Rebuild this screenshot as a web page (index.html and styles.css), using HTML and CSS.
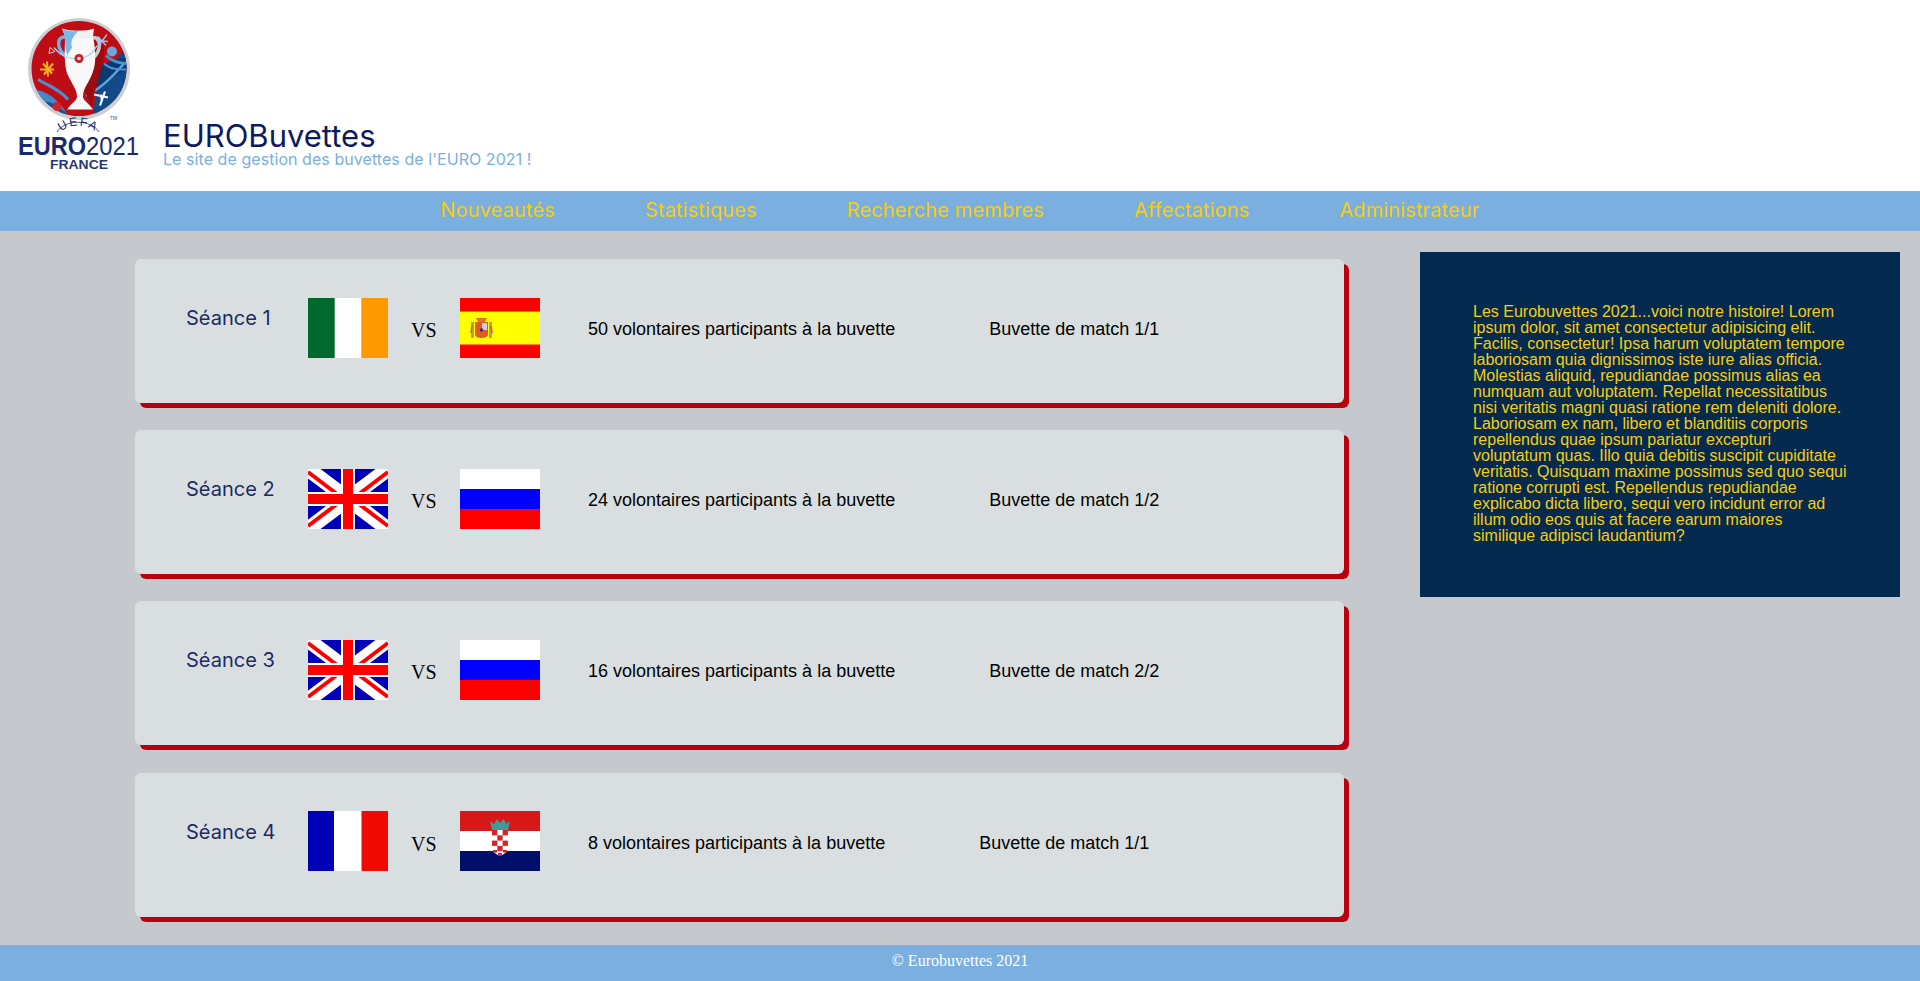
FILE: index.html
```html
<!DOCTYPE html>
<html lang="fr">
<head>
<meta charset="utf-8">
<title>EUROBuvettes</title>
<link rel="stylesheet" href="styles.css">
</head>
<body>
<header class="site-header">
  <svg class="logo" viewBox="14 14 130 160" width="130" height="160" aria-label="UEFA Euro 2021 France">
    <defs>
      <clipPath id="disc"><circle cx="79" cy="67" r="47.500"/></clipPath>
      <path id="uefa-arc" d="M59 134 C67 123 89 123 97 134"/>
    </defs>
    <g class="logo-art">
      <circle cx="79" cy="67.500" r="51" fill="#ccd0d5"/>
      <g clip-path="url(#disc)">
        <rect x="30" y="15" width="100" height="105" fill="#bf0d16"/>
        <path d="M30 88 C46 88 58 96 72 120 L30 125 Z" fill="#3f8cca"/>
        <path d="M46 100 C56 102 64 108 72 118 L42 120 Z" fill="#1c4f94"/>
        <path d="M94 112 C94 92 100 70 132 42 L132 125 L90 125 Z" fill="#104a88"/>
        <path d="M96 66 C106 62 116 56 128 56 L128 68 C114 74 104 82 92 88 Z" fill="#0b3a72"/>
        <path d="M86 94 C100 88 112 76 124 62" fill="none" stroke="#5da5dc" stroke-width="2.500"/>
        <path d="M106 54 C112 60 120 62 128 62" fill="none" stroke="#4a93d0" stroke-width="3"/>
        <path d="M104 62 C110 68 118 68 126 68" fill="none" stroke="#4a93d0" stroke-width="2"/>
        <path d="M38 78 C48 84 60 88 68 98" fill="none" stroke="#4f8fd0" stroke-width="3"/>
        <path d="M96 42 C92 54 96 72 84 88 L92 106 C96 80 106 60 104 44 Z" fill="#9c0b12"/>
      </g>
      <path d="M69 37 C56 30 54 50 70 57" fill="none" stroke="#6db1e3" stroke-width="3.500"/>
      <path d="M91 37 C102 32 102 51 92 57" fill="none" stroke="#c9ccd0" stroke-width="3.500"/>
      <path d="M65 35 C74 37 84 37 93 35 C96 50 96 62 93 70 C90 80 83 86 83 95 C83 99 89 102 93 108 L67 108 C71 102 77 99 77 95 C77 86 68 78 66 68 C64 56 65 44 65 35 Z" fill="#f8f8f9"/>
      <path d="M62 27 C70 30 86 30 94 27 L93 35 C84 38 74 38 65 35 Z" fill="#f1f2f3"/>
      <path d="M63 28 C69 30 74 30 79 29 C73 34 70 40 72 46 L67 54 C65 46 65 40 65 35 Z" fill="#7ab8e8"/>
      <path d="M54 46 C60 54 72 60 84 56 C90 54 94 50 97 44" fill="none" stroke="#a6d0ec" stroke-width="1.300"/>
      <circle cx="79" cy="57" r="4.500" fill="#c5222a"/>
      <circle cx="79" cy="57" r="1.800" fill="#f3d8d8"/>
      <circle cx="112" cy="50" r="5" fill="#69a7dc"/>
      <path d="M98 35 L106 44 M107 33 L98 45 M96 39 L108 40" stroke="#9cc6ea" stroke-width="1.300"/>
      <path d="M43 62 L52 72 M53 62 L44 73 M40 68 L54 68 M47 60 L48 75" stroke="#f3b11e" stroke-width="2"/>
      <path d="M94 93 L108 96 M105 90 L100 104 M101 93 L102 100" stroke="#f4f7fa" stroke-width="2.200"/>
      <circle cx="57" cy="105" r="4.500" fill="#d2232a"/>
      <path d="M50 46 L55 50 L49 52 Z" fill="none" stroke="#e9d4d4" stroke-width="1"/>
    </g>
    <text class="logo-tm" x="110" y="120">TM</text>
    <text class="logo-uefa"><textPath href="#uefa-arc" startOffset="3" textLength="36">UEFA</textPath></text>
    <path d="M57 132 C65 119 91 119 99 132" fill="none" stroke="#1a2a6c" stroke-width=".8"/>
    <text class="logo-euro" x="18" y="154.500" textLength="68" lengthAdjust="spacingAndGlyphs">EURO</text>
    <text class="logo-year" x="86" y="154.500" textLength="53" lengthAdjust="spacingAndGlyphs">2021</text>
    <text class="logo-france" x="50" y="169" textLength="58" lengthAdjust="spacingAndGlyphs">FRANCE</text>
  </svg>
  <div class="brand">
    <h1 class="brand-title">EUROBuvettes</h1>
    <p class="brand-sub">Le site de gestion des buvettes de l'EURO 2021 !</p>
  </div>
</header>

<nav class="main-nav">
  <a href="#">Nouveautés</a>
  <a href="#">Statistiques</a>
  <a href="#">Recherche membres</a>
  <a href="#">Affectations</a>
  <a href="#">Administrateur</a>
</nav>

<main class="content">
  <section class="sessions">
    <article class="card">
      <h2 class="card-title">Séance 1</h2>
      <div class="match">
        <svg class="flag" viewBox="0 0 80 60"><rect width="80" height="60" fill="#fff"/><rect width="26.700" height="60" fill="#006a2e"/><rect x="53.300" width="26.700" height="60" fill="#ff9900"/></svg>
        <span class="vs">VS</span>
        <svg class="flag" viewBox="0 0 80 60"><rect width="80" height="60" fill="#ff0000"/><rect y="13.500" width="80" height="33" fill="#ffff00"/><rect x="11" y="24" width="3" height="16" fill="#b9a24a"/><rect x="29" y="24" width="3" height="16" fill="#b9a24a"/><path d="M12 28 L11 35 M31 28 L32 35" stroke="#d5555a" stroke-width="1.500"/><path d="M16 20 L27 20 L25 24 L18 24 Z" fill="#d9762a"/><path d="M15 24 H28 V37 C27 41 16 41 15 37 Z" fill="#e25a1c"/><rect x="22" y="25" width="5" height="7" fill="#cfcbe0"/><circle cx="21.500" cy="32" r="1.800" fill="#35307a"/></svg>
      </div>
      <p class="card-info">50 volontaires participants à la buvette</p>
      <p class="card-info">Buvette de match 1/1</p>
    </article>
    <article class="card">
      <h2 class="card-title">Séance 2</h2>
      <div class="match">
        <svg class="flag" viewBox="0 0 80 60"><rect width="80" height="60" fill="#0000b8"/><g class="soft"><path d="M0 0 L80 60 M80 0 L0 60" stroke="#fff" stroke-width="15"/><path d="M0 3 L33 28 M80 3 L47 28 M0 57 L33 32 M80 57 L47 32" stroke="#ff0000" stroke-width="4"/><rect x="33" width="14" height="60" fill="#fff"/><rect y="23" width="80" height="14" fill="#fff"/><rect x="35" width="10" height="60" fill="#ff0000"/><rect y="25" width="80" height="10" fill="#ff0000"/></g></svg>
        <span class="vs">VS</span>
        <svg class="flag" viewBox="0 0 80 60"><rect width="80" height="20" fill="#fff"/><rect y="20" width="80" height="20" fill="#0000ff"/><rect y="40" width="80" height="20" fill="#ff0000"/></svg>
      </div>
      <p class="card-info">24 volontaires participants à la buvette</p>
      <p class="card-info">Buvette de match 1/2</p>
    </article>
    <article class="card">
      <h2 class="card-title">Séance 3</h2>
      <div class="match">
        <svg class="flag" viewBox="0 0 80 60"><rect width="80" height="60" fill="#0000b8"/><g class="soft"><path d="M0 0 L80 60 M80 0 L0 60" stroke="#fff" stroke-width="15"/><path d="M0 3 L33 28 M80 3 L47 28 M0 57 L33 32 M80 57 L47 32" stroke="#ff0000" stroke-width="4"/><rect x="33" width="14" height="60" fill="#fff"/><rect y="23" width="80" height="14" fill="#fff"/><rect x="35" width="10" height="60" fill="#ff0000"/><rect y="25" width="80" height="10" fill="#ff0000"/></g></svg>
        <span class="vs">VS</span>
        <svg class="flag" viewBox="0 0 80 60"><rect width="80" height="20" fill="#fff"/><rect y="20" width="80" height="20" fill="#0000ff"/><rect y="40" width="80" height="20" fill="#ff0000"/></svg>
      </div>
      <p class="card-info">16 volontaires participants à la buvette</p>
      <p class="card-info">Buvette de match 2/2</p>
    </article>
    <article class="card">
      <h2 class="card-title">Séance 4</h2>
      <div class="match">
        <svg class="flag" viewBox="0 0 80 60"><rect width="80" height="60" fill="#fff"/><rect width="26" height="60" fill="#0000b8"/><rect x="53.500" width="26.500" height="60" fill="#ef0a00"/></svg>
        <span class="vs">VS</span>
        <svg class="flag" viewBox="0 0 80 60"><rect width="80" height="20" fill="#d71818"/><rect y="20" width="80" height="20" fill="#fff"/><rect y="40" width="80" height="20" fill="#00106a"/><path d="M30 10 L34 13 L37 8 L40 12 L44 8 L46 13 L50 10 L48 19 H32 Z" fill="#3f9a98"/><path d="M32 19 H48 V35 C48 41 43 44 40 45 C37 44 32 41 32 35 Z" fill="#fff"/><g fill="#d8232a"><rect x="32" y="19" width="5.300" height="5.300"/><rect x="42.600" y="19" width="5.300" height="5.300"/><rect x="37.300" y="24.300" width="5.300" height="5.300"/><rect x="32" y="29.600" width="5.300" height="5.300"/><rect x="42.600" y="29.600" width="5.300" height="5.300"/><rect x="37.300" y="34.900" width="5.300" height="5.300"/><rect x="33" y="39" width="4" height="2.500"/><rect x="43" y="39" width="4" height="2.500"/><rect x="38" y="42" width="4" height="3"/></g></svg>
      </div>
      <p class="card-info">8 volontaires participants à la buvette</p>
      <p class="card-info">Buvette de match 1/1</p>
    </article>
  </section>
  <aside class="story">
    <p>Les Eurobuvettes 2021...voici notre histoire! Lorem ipsum dolor, sit amet consectetur adipisicing elit. Facilis, consectetur! Ipsa harum voluptatem tempore laboriosam quia dignissimos iste iure alias officia. Molestias aliquid, repudiandae possimus alias ea numquam aut voluptatem. Repellat necessitatibus nisi veritatis magni quasi ratione rem deleniti dolore. Laboriosam ex nam, libero et blanditiis corporis repellendus quae ipsum pariatur excepturi voluptatum quas. Illo quia debitis suscipit cupiditate veritatis. Quisquam maxime possimus sed quo sequi ratione corrupti est. Repellendus repudiandae explicabo dicta libero, sequi vero incidunt error ad illum odio eos quis at facere earum maiores similique adipisci laudantium?</p>
  </aside>
</main>

<footer class="site-footer">© Eurobuvettes 2021</footer>
</body>
</html>
```
FILE: styles.css
```css
* { box-sizing: border-box; }
html, body { margin: 0; padding: 0; }
body {
  height: 981px;
  overflow: hidden;
  display: flex;
  flex-direction: column;
  background: #c5c9ce;
  font-family: "Liberation Sans", Arial, sans-serif;
}
.site-header {
  height: 191px;
  flex: none;
  background: #fff;
  display: flex;
  align-items: flex-start;
  padding: 14px 0 0 14px;
  gap: 19px;
}
.logo { flex: none; display: block; }
.logo-art { filter: blur(.4px); transform: translateY(1.500px); }
.logo-tm { font: 5px "Liberation Sans", sans-serif; fill: #555; }
.logo-uefa { font: 400 12px "Liberation Sans", sans-serif; fill: #1a2a6c; }
.logo-euro { font: 700 25px "Liberation Sans", sans-serif; fill: #1a2a6c; }
.logo-year { font: 400 25px "Liberation Sans", sans-serif; fill: #1a2a6c; }
.logo-france { font: 700 13.500px "Liberation Sans", sans-serif; fill: #2a3670; }
.brand { padding-top: 106px; font-family: Inter, "Noto Sans", sans-serif; }
.brand-title { margin: 0; font-size: 31px; font-weight: 400; line-height: 31px; color: #0e1a5e; }
.brand-sub { margin: 0; font-size: 16px; letter-spacing: .06px; line-height: 16px; color: #7aafdf; }
.main-nav {
  height: 40px;
  flex: none;
  padding-bottom: 2px;
  background: #7aafdf;
  display: flex;
  justify-content: center;
  align-items: center;
  gap: 90px;
  font-family: Inter, "Noto Sans", sans-serif;
  font-size: 20px;
  letter-spacing: .12px;
}
.main-nav a { color: #f5cd12; text-decoration: none; }
.content {
  flex: 1;
  display: flex;
  align-items: flex-start;
  padding: 0 20px 0 135px;
}
.sessions {
  width: 1209px;
  flex: none;
  padding-top: 28px;
  display: flex;
  flex-direction: column;
  gap: 27.200px;
}
.card {
  height: 144px;
  background: #d9dfe0;
  border-radius: 6px;
  box-shadow: 5px 5px 0 #b9000f;
  display: flex;
  align-items: flex-start;
  padding: 38.600px 0 0 51px;
}
.card-title {
  width: 122px;
  flex: none;
  margin: 8.400px 0 0;
  font-family: Inter, "Noto Sans", sans-serif;
  font-size: 20px;
  line-height: 24px;
  font-weight: 400;
  color: #1c2a66;
}
.match { display: flex; align-items: flex-start; width: 280px; flex: none; }
.flag { width: 80px; height: 60px; display: block; flex: none; }
.soft { filter: blur(.35px); }
.vs {
  width: 72px;
  flex: none;
  margin-top: 20.400px;
  padding-left: 23px;
  font-family: "Liberation Serif", "Times New Roman", serif;
  font-size: 20px;
  line-height: 24px;
  color: #000;
}
.card-info {
  margin: 21.400px 94px 0 0;
  font-size: 18px;
  line-height: 20px;
  color: #000;
}
.story {
  width: 480px;
  height: 345px;
  flex: none;
  margin: 21px 0 0 76px;
  padding: 52px 53px;
  background: #042a50;
  color: #f5cd12;
  font-size: 16px;
  line-height: 16px;
}
.story p { margin: 0; }
.site-footer {
  height: 36px;
  flex: none;
  background: #7aafdf;
  color: #fff;
  text-align: center;
  font-family: "Liberation Serif", "Times New Roman", serif;
  font-size: 16px;
  line-height: 32px;
}
```
